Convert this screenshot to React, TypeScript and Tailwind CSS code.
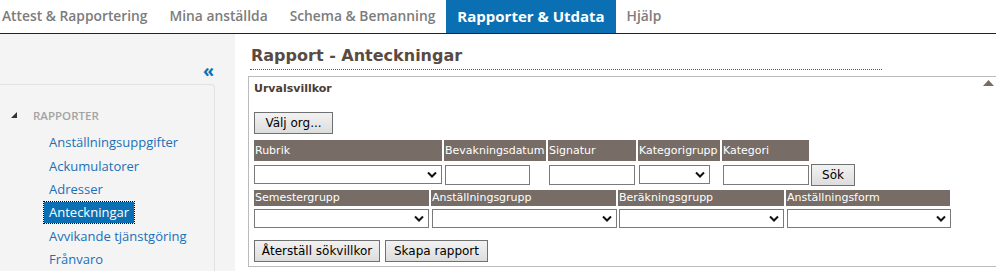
import React from "react";

const tabs = [
  { label: "Attest & Rapportering" },
  { label: "Mina anställda" },
  { label: "Schema & Bemanning" },
  { label: "Rapporter & Utdata", active: true },
  { label: "Hjälp" },
];

const reports = [
  "Anställningsuppgifter",
  "Ackumulatorer",
  "Adresser",
  "Anteckningar",
  "Avvikande tjänstgöring",
  "Frånvaro",
];

function Chevron() {
  return (
    <svg width="10" height="7" viewBox="0 0 10 7" className="shrink-0">
      <path d="M1 1.5 L5 5.5 L9 1.5" fill="none" stroke="#111" strokeWidth="2" />
    </svg>
  );
}

function Select({ w }: { w: string }) {
  return (
    <div
      className={`${w} h-[19px] border border-[#7a7a7a] bg-white flex items-center justify-end pr-[4px]`}
    >
      <Chevron />
    </div>
  );
}

function TextInput({ w }: { w: string }) {
  return <div className={`${w} h-[20px] border border-[#7a7a7a] bg-white`} />;
}

function Btn({ children, w }: { children: React.ReactNode; w: string }) {
  return (
    <button
      className={`${w} h-[22px] border border-[#707070] bg-gradient-to-b from-[#f2f2f2] to-[#dddddd] text-[12px] text-black leading-none flex items-center justify-center`}
    >
      {children}
    </button>
  );
}

function Head({ w, h, children }: { w: string; h: string; children: React.ReactNode }) {
  return (
    <div
      className={`${w} ${h} bg-[#776d66] text-white text-[11px] leading-none flex items-center px-[1px] whitespace-nowrap`}
    >
      {children}
    </div>
  );
}

export default function App() {
  return (
    <div className="w-[996px] h-[271px] overflow-hidden bg-white">
      <nav
        className="h-[34px] flex border-b border-[#222] text-[13.8px] font-semibold text-[#7c7c7c]"
        style={{ fontFamily: '"Open Sans", sans-serif' }}
      >
        {tabs.map((t, i) => (
          <div
            key={t.label}
            className={`flex items-center whitespace-nowrap ${i === 0 ? "pl-[2px] pr-[11px]" : "px-[11px]"} ${
              t.active ? "bg-[#0b70b3] text-white font-bold text-[15px]" : ""
            }`}
          >
            {t.label}
          </div>
        ))}
      </nav>

      <div className="flex h-[237px]">
        <aside
          className="w-[235px] shrink-0 bg-[#f4f4f4] flex flex-col"
          style={{ fontFamily: '"Open Sans", sans-serif' }}
        >
          <div className="h-[52px] flex items-end justify-end pr-[21px] pb-[5px]">
            <span className="text-[#0b70b3] text-[18px] font-bold leading-none">«</span>
          </div>
          <div className="w-[215px] flex-1 border-t border-r border-[#e2e2e2] rounded-tr-[4px] pt-[22px]">
            <div className="flex items-center pl-[11px] h-[16px]">
              <svg width="6" height="6" viewBox="0 0 6 6" className="mr-[16px]">
                <path d="M6 0 L6 6 L0 6 Z" fill="#333" />
              </svg>
              <span className="text-[11.5px] font-semibold text-[#a3a3a3]">RAPPORTER</span>
            </div>
            <ul className="mt-[8px] pl-[44px] text-[13px] text-[#1a70b8]">
              {reports.map((r) => (
                <li key={r} className="h-[23.3px] flex items-center">
                  <span
                    className={`px-[5px] leading-[21px] ${
                      r === "Anteckningar"
                        ? "bg-[#0b70b3] text-white outline-1 outline-dotted outline-black"
                        : ""
                    }`}
                  >
                    {r}
                  </span>
                </li>
              ))}
            </ul>
          </div>
        </aside>

        <main
          className="flex-1 pl-[13px] text-[#333]"
          style={{ fontFamily: '"DejaVu Sans", Verdana, sans-serif' }}
        >
          <div className="w-[632px] ml-[2px] h-[36px] border-b border-dotted border-[#0b70b3] flex items-end pb-[5px] pl-[1px]">
            <h1 className="text-[16px] font-bold text-[#594a42] leading-none">Rapport - Anteckningar</h1>
          </div>
          <div className="mt-[6px] h-[191px] border-l border-t border-b border-[#bbbbbb] pl-[5px] pt-[3px]">
            <div className="flex justify-between items-start">
              <span className="text-[11px] font-bold text-[#4b3c34] pt-[1px]">Urvalsvillkor</span>
              <svg width="11" height="6" viewBox="0 0 11 6" className="mt-0 mr-[2px]">
                <path d="M0 6 L5.5 0 L11 6 Z" fill="#776d66" />
              </svg>
            </div>
            <div className="mt-[14px]">
              <Btn w="w-[79px]">Välj org...</Btn>
            </div>

            <div className="mt-[6px] flex gap-[2px]">
              <Head w="w-[188px]" h="h-[21px]">Rubrik</Head>
              <Head w="w-[102px]" h="h-[21px]">Bevakningsdatum</Head>
              <Head w="w-[88px]" h="h-[21px]">Signatur</Head>
              <Head w="w-[82px]" h="h-[21px]">Kategorigrupp</Head>
              <Head w="w-[87px]" h="h-[21px]">Kategori</Head>
            </div>
            <div className="mt-[2px] flex items-center h-[24px]">
              <div className="w-[190px]">
                <Select w="w-[188px]" />
              </div>
              <div className="w-[104px] pl-[1px]">
                <TextInput w="w-[85px]" />
              </div>
              <div className="w-[90px] pl-[1px]">
                <TextInput w="w-[86px]" />
              </div>
              <div className="w-[84px] pl-[1px]">
                <Select w="w-[71px]" />
              </div>
              <div className="w-[89px] pl-[1px]">
                <TextInput w="w-[86px]" />
              </div>
              <Btn w="w-[44px]">Sök</Btn>
            </div>

            <div className="mt-[3px] flex gap-[2px]">
              <Head w="w-[175px]" h="h-[16px]">Semestergrupp</Head>
              <Head w="w-[185px]" h="h-[16px]">Anställningsgrupp</Head>
              <Head w="w-[166px]" h="h-[16px]">Beräkningsgrupp</Head>
              <Head w="w-[164px]" h="h-[16px]">Anställningsform</Head>
            </div>
            <div className="mt-[3px] flex">
              <div className="w-[177px]">
                <Select w="w-[175px]" />
              </div>
              <div className="w-[187px] pl-[1px]">
                <Select w="w-[185px]" />
              </div>
              <div className="w-[168px] pl-[1px]">
                <Select w="w-[165px]" />
              </div>
              <div className="w-[166px] pl-[1px]">
                <Select w="w-[164px]" />
              </div>
            </div>

            <div className="mt-[12px] flex gap-[5px]">
              <Btn w="w-[126px]">Återställ sökvillkor</Btn>
              <Btn w="w-[103px]">Skapa rapport</Btn>
            </div>
          </div>
        </main>
      </div>
    </div>
  );
}
